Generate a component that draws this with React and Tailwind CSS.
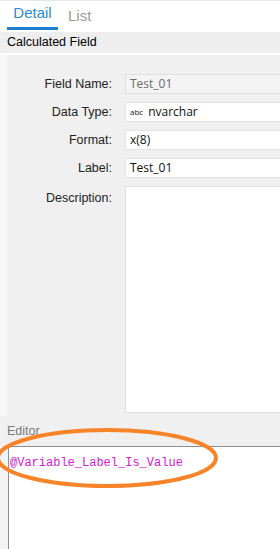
export default function App() {
  const rows = [
    { label: "Field Name:", value: "Test_01", disabled: true },
    { label: "Data Type:", value: "nvarchar", prefix: "abc" },
    { label: "Format:", value: "x(8)" },
    { label: "Label:", value: "Test_01" },
  ];

  return (
    <div
      className="relative w-[280px] h-[549px] overflow-hidden bg-white text-black flex flex-col"
      style={{ fontFamily: '"Liberation Sans", Arial, sans-serif' }}
    >
      {/* tabs */}
      <div className="h-[32px] shrink-0 border-t border-[#e6e6e6] flex items-end gap-[10px] pl-[7px]">
        <div className="w-[51px] h-[31px] flex flex-col items-center justify-end">
          <span className="text-[15px] leading-[18px] text-[#2b8ad3] mb-[5px]">Detail</span>
          <div className="w-full h-[3px] bg-[#1f7fcf] mb-[2px]" />
        </div>
        <span className="text-[15px] leading-[18px] text-[#9a9a9a] mb-[7px]">List</span>
      </div>

      {/* header */}
      <div className="h-[21px] shrink-0 bg-[#eeeeee] flex items-center pl-[7px] text-[12.5px]">
        Calculated Field
      </div>
      <div className="h-[2px] shrink-0 bg-white" />

      {/* main panel */}
      <div className="flex h-[361px] shrink-0 bg-[#f7f7f7]">
        <div className="w-[7px] shrink-0" />
        <div className="flex-1 bg-[#f0f0f0] pt-[19px] flex flex-col gap-[8px]">
          {rows.map((r) => (
            <div key={r.label} className="flex items-center h-[20px]">
              <div className="w-[105px] shrink-0 text-right text-[12.5px] text-[#222]">{r.label}</div>
              <div
                className={
                  "ml-[13px] flex-1 h-[20px] border border-r-0 flex items-center pl-[4px] text-[12px] whitespace-nowrap " +
                  (r.disabled ? "bg-[#f4f4f4] border-[#e0e0e0] text-[#6b6b6b]" : "bg-white border-[#e3e3e3] text-[#111]")
                }
                style={{ fontFamily: '"Open Sans", "Liberation Sans", sans-serif' }}
              >
                {r.prefix && <span className="text-[8px] mr-[5px]">{r.prefix}</span>}
                {r.value}
              </div>
            </div>
          ))}
          <div className="flex items-start">
            <div className="w-[105px] shrink-0 text-right text-[12.5px] text-[#222] pt-[3px]">Description:</div>
            <div className="ml-[13px] flex-1 h-[227px] bg-white border border-r-0 border-[#dedede]" />
          </div>
        </div>
      </div>

      {/* editor label */}
      <div className="h-[30px] shrink-0 bg-[#f0f0f0] flex items-center pl-[7px] text-[12.5px] text-[#7a7a7a]">
        Editor
      </div>

      {/* editor */}
      <div className="flex-1 flex bg-[#f3f3f3]">
        <div className="w-[8px] shrink-0" />
        <div className="flex-1 bg-white border-t border-l border-[#8f8f8f] pt-[2px] pl-[1px]">
          <span
            className="text-[12px] leading-[14px] text-[#d21ad2]"
            style={{ fontFamily: '"Liberation Mono", "Courier New", monospace' }}
          >
            @Variable_Label_Is_Value
          </span>
        </div>
      </div>

      {/* orange annotation */}
      <svg className="absolute left-0 top-0 pointer-events-none" width="280" height="549">
        <ellipse cx="107" cy="458" rx="109" ry="28" fill="none" stroke="#f8842a" strokeWidth="4" />
      </svg>
    </div>
  );
}
